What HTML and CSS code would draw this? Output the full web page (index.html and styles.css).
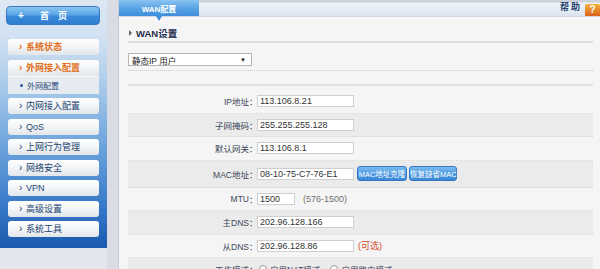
FILE: index.html
```html
<!DOCTYPE html>
<html lang="zh-CN">
<head>
  <meta charset="UTF-8">
  <title>WAN配置</title>
  <link rel="stylesheet" href="styles.css">
</head>
<body>
  <div class="page">
    <!-- 左侧菜单 -->
    <aside class="sidebar">
      <div class="side-panel">
        <a href="#" class="home-btn"><span class="home-plus">+</span><span class="home-text">首页</span></a>
        <ul class="side-menu">
          <li class="menu-item open">系统状态</li>
          <li class="menu-item open has-sub">外网接入配置</li>
          <li class="sub-item">外网配置</li>
          <li class="menu-item">内网接入配置</li>
          <li class="menu-item">QoS</li>
          <li class="menu-item">上网行为管理</li>
          <li class="menu-item">网络安全</li>
          <li class="menu-item">VPN</li>
          <li class="menu-item">高级设置</li>
          <li class="menu-item">系统工具</li>
        </ul>
      </div>
    </aside>
    <div class="divider"></div>

    <!-- 主内容 -->
    <main class="main">
      <div class="tab-bar">
        <div class="tab">WAN配置</div>
        <div class="help"><span class="help-text">帮助</span><span class="help-icon">?</span></div>
      </div>

      <div class="content">
        <h2 class="section-title"><span class="title-arrow"></span>WAN设置</h2>

        <div class="select-row">
          <div class="mode-select">静态IP 用户<span class="select-arrow">▼</span></div>
        </div>
        <div class="spacer"></div>

        <div class="form-rows">
          <div class="form-row">
            <label class="row-label">IP地址</label><span class="colon">：</span>
            <input type="text" class="text-input" value="113.106.8.21">
          </div>
          <div class="form-row shaded">
            <label class="row-label">子网掩码</label><span class="colon">：</span>
            <input type="text" class="text-input" value="255.255.255.128">
          </div>
          <div class="form-row">
            <label class="row-label">默认网关</label><span class="colon">：</span>
            <input type="text" class="text-input" value="113.106.8.1">
          </div>
          <div class="form-row shaded tall">
            <label class="row-label">MAC地址</label><span class="colon">：</span>
            <input type="text" class="text-input" value="08-10-75-C7-76-E1">
            <button class="mini-btn">MAC地址克隆</button>
            <button class="mini-btn second">恢复缺省MAC</button>
          </div>
          <div class="form-row">
            <label class="row-label">MTU</label><span class="colon">：</span>
            <input type="text" class="text-input short" value="1500">
            <span class="hint">(576-1500)</span>
          </div>
          <div class="form-row shaded">
            <label class="row-label">主DNS</label><span class="colon">：</span>
            <input type="text" class="text-input" value="202.96.128.166">
          </div>
          <div class="form-row">
            <label class="row-label">从DNS</label><span class="colon">：</span>
            <input type="text" class="text-input" value="202.96.128.86">
            <span class="optional">(可选)</span>
          </div>
          <div class="form-row shaded">
            <label class="row-label">工作模式</label><span class="colon">：</span>
            <span class="radio"></span><span class="radio-text">启用NAT模式</span>
            <span class="radio"></span><span class="radio-text">启用路由模式</span>
          </div>
        </div>
      </div>
    </main>
  </div>
</body>
</html>
```

FILE: styles.css
```css
/* ===== Base ===== */
* {
  margin: 0;
  padding: 0;
  box-sizing: border-box;
}

body {
  width: 600px;
  height: 269px;
  overflow: hidden;
  background: #f5f5f5;
  font-family: "Liberation Sans", "Noto Sans CJK SC", sans-serif;
  color: #333;
}

.page {
  display: flex;
  height: 269px;
}

/* ===== Sidebar ===== */
.sidebar {
  width: 107px;
  flex: none;
  background: #e3e7ed;
}

.side-panel {
  height: 248px;
  padding: 6px 0 0 6px;
  background: linear-gradient(to bottom, #dde8f3 0%, #d2e2f2 14%, #b5d1ec 30%, #86b5e3 48%, #5d97d6 66%, #3577c7 84%, #1b5aae 100%);
}

.home-btn {
  display: flex;
  align-items: center;
  width: 94px;
  height: 19px;
  border: 1px solid #3a79c2;
  border-radius: 4px;
  background: linear-gradient(to bottom, #8cc6f3 0%, #5aa5e6 45%, #3a8ad9 55%, #2e7dd0 100%);
  color: #fff;
  text-decoration: none;
  font-weight: bold;
}

.home-plus {
  width: 17px;
  padding-left: 11px;
  font-size: 10px;
}

.home-text {
  padding-left: 16px;
  font-size: 9px;
  letter-spacing: 9px;
}

.side-menu {
  list-style: none;
  margin-top: 14px;
  margin-left: 2px;
}

.menu-item {
  width: 91px;
  height: 16px;
  line-height: 16px;
  margin-bottom: 4.5px;
  padding-left: 11px;
  border-radius: 3px;
  background: linear-gradient(to bottom, #ffffff 0%, #f3f5f7 50%, #e1e6eb 100%);
  font-size: 9px;
  color: #22436f;
}

.menu-item::before {
  content: "›";
  display: inline-block;
  width: 7px;
  font-size: 10px;
}

.menu-item.open {
  color: #e2701c;
  font-weight: bold;
}

.menu-item.has-sub {
  margin-bottom: 0;
  border-radius: 3px 3px 0 0;
}

.sub-item {
  display: flex;
  align-items: center;
  width: 91px;
  height: 18px;
  margin-bottom: 4.5px;
  padding-left: 12px;
  border-top: 1px solid #f7f9fb;
  background: #e6ebf1;
  font-size: 8px;
  color: #2b4a76;
}

.sub-item::before {
  content: "";
  width: 3px;
  height: 3px;
  margin-right: 4px;
  border-radius: 50%;
  background: #2b5a98;
}

.divider {
  width: 12px;
  flex: none;
  background: #dadce5;
  border-right: 1px solid #c8cbd5;
}

/* ===== Main ===== */
.main {
  flex: 1;
  display: flex;
  flex-direction: column;
  min-width: 0;
}

.tab-bar {
  height: 18px;
  display: flex;
  justify-content: space-between;
  align-items: stretch;
  border-bottom: 1px solid #d0d9e3;
  background: linear-gradient(to bottom, #ccd3da 0, #ccd3da 2px, #eef2f7 3px, #dbe4ee 100%);
}

.tab {
  position: relative;
  width: 80px;
  display: flex;
  align-items: center;
  justify-content: center;
  background: linear-gradient(to bottom, #8ac3f0 0%, #5ba5e6 50%, #3f8ddb 100%);
  color: #fff;
  font-size: 8px;
  font-weight: bold;
}

.tab::after {
  content: "";
  position: absolute;
  left: 37px;
  bottom: -5px;
  border-top: 5px solid #3f8ddb;
  border-left: 3px solid transparent;
  border-right: 3px solid transparent;
}

.help {
  display: flex;
  align-items: flex-end;
  gap: 3px;
}

.help-text {
  margin-bottom: 3px;
  font-size: 9px;
  font-weight: bold;
  letter-spacing: 2px;
  color: #24446f;
}

.help-icon {
  width: 15px;
  height: 12px;
  border-radius: 2px 2px 0 0;
  background: linear-gradient(to bottom, #f7b03c, #d9621a);
  color: #fff;
  font-size: 10px;
  font-weight: bold;
  line-height: 12px;
  text-align: center;
}

.content {
  flex: 1;
  padding: 0 7px 0 9px;
  background: #f5f5f5;
}

.section-title {
  display: flex;
  align-items: center;
  height: 18px;
  margin-top: 8px;
  border-bottom: 2px solid #dedede;
  font-size: 9.5px;
  font-weight: bold;
  color: #1f2c4d;
}

.title-arrow {
  width: 0;
  height: 0;
  margin: 0 4px 0 1px;
  border-left: 3px solid #666;
  border-top: 3px solid transparent;
  border-bottom: 3px solid transparent;
}

.select-row {
  padding: 10px 0 4px;
  border-bottom: 1px dotted #c9c9c9;
}

.mode-select {
  display: flex;
  align-items: center;
  justify-content: space-between;
  width: 124px;
  height: 13px;
  padding: 0 5px 0 3px;
  border: 1px solid #b4b4b4;
  background: #fff;
  font-size: 8.5px;
  color: #222;
}

.select-arrow {
  font-size: 6px;
}

.spacer {
  height: 15px;
  border-bottom: 2px solid #e0e0e0;
}

/* ===== Form rows ===== */
.form-rows {
  margin-top: 4px;
}

.form-row {
  display: flex;
  align-items: center;
  height: 23.5px;
  border-bottom: 1px dotted #d6d6d6;
}

.form-row.shaded {
  background: #ebebeb;
}

.form-row.tall {
  height: 27px;
}

.row-label {
  width: 121px;
  text-align: right;
  font-size: 8.5px;
  color: #3b4859;
}

.colon {
  width: 8px;
  text-align: center;
  font-size: 8.5px;
  color: #3b4859;
}

.text-input {
  width: 97px;
  height: 12px;
  padding: 0 2px;
  border: 1px solid #cfcfcf;
  background: #fff;
  font-family: "Liberation Sans", "Noto Sans CJK SC", sans-serif;
  font-size: 9px;
  color: #333;
  outline: none;
}

.text-input.short {
  width: 38px;
}

.mini-btn {
  width: 50px;
  height: 15px;
  margin-left: 3px;
  border: 1px solid #3477c2;
  border-radius: 3px;
  background: linear-gradient(to bottom, #7cbcf0 0%, #4f9be3 50%, #3a87d6 100%);
  color: #fff;
  font-family: "Liberation Sans", "Noto Sans CJK SC", sans-serif;
  font-size: 7.5px;
  white-space: nowrap;
  cursor: pointer;
}

.mini-btn.second {
  width: 48px;
  margin-left: 2px;
}

.hint {
  margin-left: 8px;
  font-size: 9px;
  color: #707070;
}

.optional {
  margin-left: 4px;
  font-size: 9px;
  color: #d2462a;
}

.radio {
  width: 8px;
  height: 8px;
  margin: 0 3px 0 2px;
  border: 1px solid #999;
  border-radius: 50%;
  background: #fff;
}

.radio-text {
  margin-right: 8px;
  font-size: 8.5px;
  color: #3b4859;
}
```
